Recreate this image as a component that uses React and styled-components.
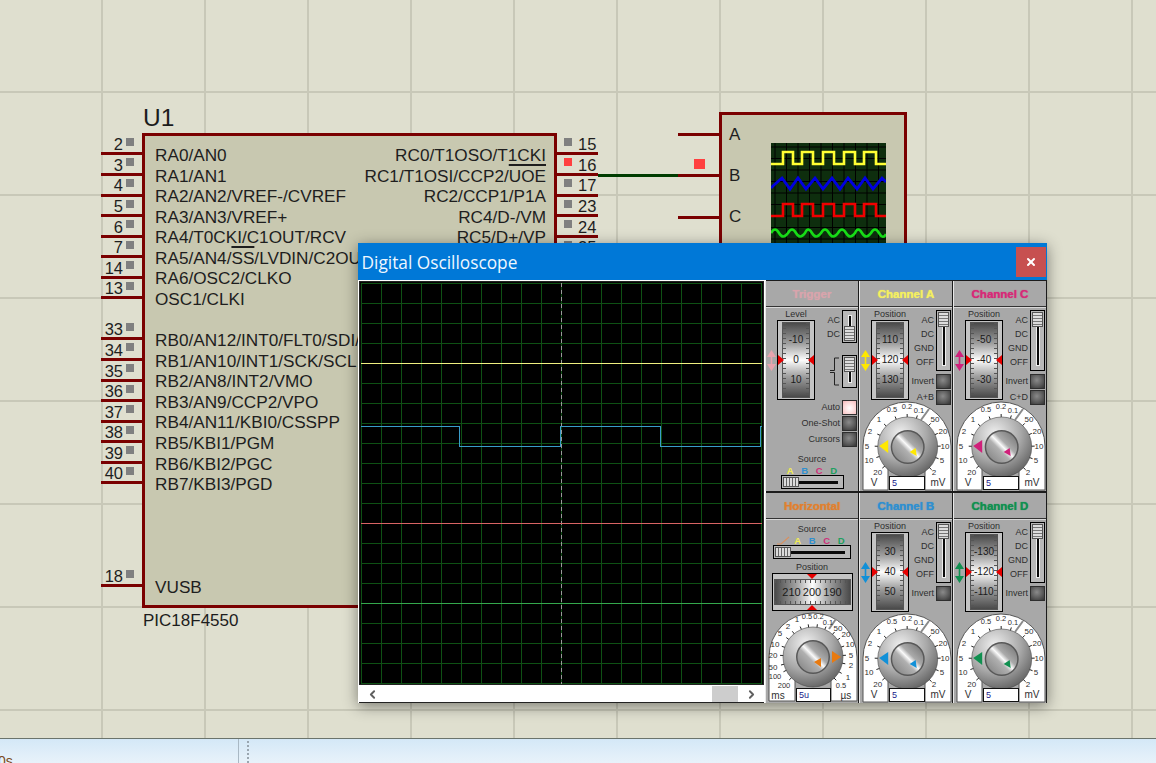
import React from "react";
import styled, { createGlobalStyle, css } from "styled-components";
import { ChevronLeft, ChevronRight, X } from "lucide-react";

const GlobalStyle = createGlobalStyle`
  html, body {
    margin: 0;
    padding: 0;
    overflow: hidden;
    font-family: "Liberation Sans", Arial, sans-serif;
  }
`;

const MAROON = "#7a0000";
const ROW = "20.57px";

const Page = styled.div`
  width: 1156px;
  height: 763px;
  display: flex;
  flex-direction: column;
  overflow: hidden;
`;

const Canvas = styled.div`
  position: relative;
  flex: 1;
  overflow: hidden;
  background-color: #dfdfcf;
  background-image: linear-gradient(to right, #c8c8b8 2px, transparent 2px),
    linear-gradient(to bottom, #c8c8b8 2px, transparent 2px);
  background-size: 103px 103px;
  background-position: 101px 91px;
`;

const StatusBar = styled.div`
  height: 24px;
  border-top: 1px solid #6b746c;
  background: linear-gradient(#d4e8f7, #e8f2fa);
  display: flex;
  overflow: hidden;
`;

const StatusTime = styled.div`
  width: 240px;
  margin-left: -2px;
  padding-top: 14px;
  font-size: 14px;
  color: #7a4a20;
  border-right: 1px solid #a9b8c4;
`;

const StatusGrip = styled.div`
  width: 1px;
  margin: 2px 0 0 8px;
  border-left: 2px dotted #9aa6b0;
`;

/* schematic parts */
const ChipRef = styled.div`
  position: absolute;
  left: 143px;
  top: 104px;
  font-size: 24.5px;
  line-height: 28px;
  color: #1c1c1c;
`;

const ChipName = styled.div`
  position: absolute;
  left: 143px;
  top: 611px;
  font-size: 17px;
  line-height: 20px;
  color: #1c1c1c;
`;

const Chip = styled.div`
  position: absolute;
  left: 142px;
  top: 133px;
  width: 415px;
  height: 475px;
  box-sizing: border-box;
  border: 3px solid ${MAROON};
  background: #c8c8b0;
  display: flex;
  justify-content: space-between;
  padding: 9.1px 8px 0 10px;
`;

const LabelColumn = styled.div`
  width: 190px;
  flex: none;
  display: flex;
  flex-direction: column;
  align-items: ${(p) => (p.$right ? "flex-end" : "flex-start")};
`;

const PinLabel = styled.div`
  height: ${ROW};
  line-height: ${ROW};
  font-size: 17.2px;
  color: #1e1e1e;
  white-space: nowrap;
`;

const Over = styled.span`
  text-decoration: overline;
  text-decoration-thickness: 2px;
`;

const PinColumn = styled.div`
  position: absolute;
  top: -1.2px;
  ${(p) => (p.$right ? "left: calc(100% + 3px);" : "right: calc(100% + 3px);")}
  width: 41px;
`;

const Pin = styled.div`
  height: ${ROW};
  box-sizing: border-box;
  display: flex;
  flex-direction: ${(p) => (p.$right ? "row-reverse" : "row")};
  justify-content: flex-end;
  gap: ${(p) => (p.$right ? 6 : 3)}px;
  padding: ${(p) => (p.$right ? "0 0 0 7px" : "0 8px 0 0")};
  border-bottom: ${(p) => (p.$blank ? "none" : `3px solid ${MAROON}`)};
`;

const PinNumber = styled.span`
  font-size: 16.5px;
  line-height: 17px;
  color: #1e1e1e;
  margin-top: 1.5px;
`;

const PinMark = styled.i`
  width: 8px;
  height: 8px;
  margin-top: 3px;
  background: ${(p) => (p.$live ? "#ff4040" : "#808080")};
`;

const Scope = styled.div`
  position: absolute;
  left: 719px;
  top: 112px;
  width: 188px;
  height: 190px;
  box-sizing: border-box;
  border: 3px solid ${MAROON};
  background: #c8c8b0;
  display: flex;
  padding: 28px 0 0 49px;
`;

const ScopeInputs = styled.div`
  position: absolute;
  right: 100%;
  top: 5.5px;
  width: 44px;
`;

const ScopeWire = styled.div`
  height: 41.3px;
  box-sizing: border-box;
  display: flex;
  align-items: flex-start;
  position: relative;

  &::before {
    content: "";
    position: absolute;
    left: 0;
    right: 0;
    top: 12.5px;
    height: 3px;
    background: ${MAROON};
  }

  &::after {
    content: "${(p) => p.$name}";
    position: absolute;
    left: calc(100% + 7px);
    top: 4px;
    font-size: 17px;
    line-height: 20px;
    color: #1e1e1e;
  }
`;

const NetWire = styled.div`
  position: absolute;
  left: 598px;
  top: 174px;
  width: 80px;
  height: 3px;
  background: #003c00;
`;

const NetProbe = styled.div`
  position: absolute;
  left: 694px;
  top: 159px;
  width: 11px;
  height: 10px;
  background: #ff4040;
`;

const ScopeScreen = styled.svg`
  display: block;
  background-color: #0e2e0e;
`;

/* oscilloscope window */
const ScopeWindow = styled.div`
  position: absolute;
  left: 358px;
  top: 243px;
  width: 689px;
  height: 460px;
  display: flex;
  flex-direction: column;
  background: #fff;
  box-shadow: 0 3px 14px rgba(0, 0, 0, 0.45);
`;

const TitleBar = styled.div`
  height: 37px;
  flex: none;
  background: #0078d7;
  display: flex;
  align-items: center;
  justify-content: space-between;
  padding: 0 1px 0 3.5px;
`;

const WindowTitle = styled.div`
  font-family: "Open Sans", "Noto Sans", sans-serif;
  font-size: 17.3px;
  line-height: 24px;
  margin-top: 3px;
  color: #eef7ff;
`;

const CloseButton = styled.div`
  width: 30px;
  height: 30px;
  background: #c75050;
  color: #fff;
  display: flex;
  align-items: center;
  justify-content: center;
`;

const WindowBody = styled.div`
  flex: 1;
  display: flex;
  min-height: 0;
`;

const PlotColumn = styled.div`
  width: 407px;
  flex: none;
  box-sizing: border-box;
  padding: 1px 1px 0 1px;
  display: flex;
  flex-direction: column;
`;

const PlotFrame = styled.div`
  width: 405px;
  height: 404px;
  box-sizing: border-box;
  border: 1px solid #222;
  padding: 1px;
  background: #050505;
`;

const Plot = styled.svg`
  display: block;
  background: #000;
`;

const ScrollBar = styled.div`
  height: 17px;
  margin-top: 1px;
  width: 405px;
  box-sizing: border-box;
  display: flex;
  align-items: center;
  color: #5f5f5f;
  border-bottom: 1px solid #222;
`;

const ScrollArrow = styled.div`
  width: 26px;
  flex: none;
  display: flex;
  justify-content: center;
`;

const ScrollTrack = styled.div`
  flex: 1;
  height: 100%;
  display: flex;
  justify-content: flex-end;
`;

const ScrollThumb = styled.div`
  width: 26px;
  background: #cdcdcd;
`;

const Controls = styled.div`
  flex: 1;
  display: grid;
  grid-template-columns: repeat(3, 92px);
  grid-template-rows: 210px 210px;
  gap: 2px;
  padding: 1px 1px 0 1px;
  background: linear-gradient(to right, #fff 1px, #1c1c1c 1px);
`;

const Panel = styled.div`
  background: #a8a8a8;
  border-left: 1px solid #e8e8e8;
  margin-left: -1px;
  display: flex;
  flex-direction: column;
  overflow: hidden;
`;

const PanelTitle = styled.div`
  height: 25px;
  flex: none;
  border-bottom: 1px solid #333;
  box-shadow: 0 1px 0 #d8d8d8;
  display: flex;
  align-items: center;
  justify-content: center;
  font-size: 11.5px;
  font-weight: 700;
  color: ${(p) => p.$color};
  text-shadow: 0 0 1px ${(p) => p.$color};
`;

const PanelBody = styled.div`
  flex: 1;
  display: flex;
  flex-direction: column;
`;

const TopSection = styled.div`
  height: 93px;
  flex: none;
  display: flex;
`;

const FaderColumn = styled.div`
  width: 49px;
  flex: none;
  display: flex;
  flex-direction: column;
`;

const SmallLabel = styled.div`
  font-size: 9px;
  line-height: ${(p) => p.$line || 11}px;
  color: #2e2e2e;
  text-align: ${(p) => p.$align || "center"};
  white-space: nowrap;
`;

const FaderCaption = styled(SmallLabel)`
  margin: 2px 0 0 11px;
`;

const FaderRow = styled.div`
  display: flex;
  align-items: center;
`;

const ArrowSlot = styled.svg`
  width: 11px;
  height: 21px;
  flex: none;
`;

const Fader = styled.div`
  position: relative;
  box-sizing: border-box;
  border: 1px solid #000;
  background: #c4c4c4;
  ${(p) =>
    p.$horizontal
      ? css`
          width: 81px;
          height: 38px;
          margin: 0 auto;
          padding: 6px 2px;
        `
      : css`
          width: 38px;
          height: 80px;
          padding: 2px 5px;
        `}

  &::before,
  &::after {
    content: "";
    position: absolute;
    width: 0;
    height: 0;
    z-index: 1;
    ${(p) =>
      p.$horizontal
        ? css`
            left: calc(50% - 5px);
            border-left: 5px solid transparent;
            border-right: 5px solid transparent;
          `
        : css`
            top: calc(50% - 5px);
            border-top: 5px solid transparent;
            border-bottom: 5px solid transparent;
          `}
  }

  &::before {
    ${(p) =>
      p.$horizontal
        ? "top: 0; border-top: 5px solid #e60000;"
        : "left: 0; border-left: 6px solid #e60000;"}
  }

  &::after {
    ${(p) =>
      p.$horizontal
        ? "bottom: 0; border-bottom: 5px solid #e60000;"
        : "right: 0; border-right: 6px solid #e60000;"}
  }
`;

const Drum = styled.div`
  position: relative;
  width: 100%;
  height: 100%;
  display: flex;
  align-items: center;
  justify-content: center;
  flex-direction: ${(p) => (p.$horizontal ? "row" : "column")};
  background: linear-gradient(
    ${(p) => (p.$horizontal ? "to right" : "to bottom")},
    #4a4a4a,
    #a0a0a0 28%,
    #fdfdfd 50%,
    #a0a0a0 72%,
    #4a4a4a
  );
  box-shadow: 0 0 0 1px #555;

  &::before,
  &::after {
    content: "";
    position: absolute;
    ${(p) =>
      p.$horizontal
        ? css`
            left: 0;
            right: 0;
            height: 3px;
            background: repeating-linear-gradient(to right, #555 0 1px, transparent 1px 5px);
          `
        : css`
            top: 0;
            bottom: 0;
            width: 3px;
            background: repeating-linear-gradient(to bottom, #555 0 1px, transparent 1px 5px);
          `}
  }

  &::before {
    ${(p) => (p.$horizontal ? "top: 0;" : "left: 0;")}
  }

  &::after {
    ${(p) => (p.$horizontal ? "bottom: 0;" : "right: 0;")}
  }
`;

const DrumMark = styled.span`
  font-size: 10px;
  color: #1a1a1a;
  ${(p) =>
    p.$horizontal
      ? "width: 20.5px; text-align: center; font-size: 11px;"
      : "line-height: 20px;"}
`;

const SwitchColumn = styled.div`
  flex: 1;
  display: flex;
  flex-direction: column;
  align-items: flex-end;
  padding: 3px 1px 0 0;
`;

const SwitchRow = styled.div`
  display: flex;
  justify-content: flex-end;
  align-items: ${(p) => (p.$center ? "center" : "flex-start")};
  gap: 2px;
  margin-top: ${(p) => p.$gap || 0}px;
`;

const SwitchLabels = styled.div`
  padding-top: 3px;
`;

const SlideSwitch = styled.div`
  position: relative;
  box-sizing: border-box;
  border: 1px solid #000;
  background: #b8b8b8;
  display: flex;
  ${(p) =>
    p.$horizontal
      ? css`
          height: 14px;
          width: ${p.$size}px;
          align-items: stretch;
          padding: 1px;
        `
      : css`
          width: 15px;
          height: ${p.$size}px;
          flex-direction: column;
          padding: 1px;
          justify-content: ${p.$end ? "flex-end" : "flex-start"};
        `}

  &::before {
    content: "";
    position: absolute;
    background: #0a0a0a;
    ${(p) =>
      p.$horizontal
        ? "left: 6px; right: 5px; top: 4.5px; height: 3px;"
        : "top: 5px; bottom: 5px; left: 5.5px; width: 2px; box-shadow: 0 0 0 1px #eee;"}
  }
`;

const SwitchThumb = styled.div`
  position: relative;
  flex: none;
  box-sizing: border-box;
  border: 1px solid #555;
  ${(p) =>
    p.$horizontal
      ? css`
          width: 16px;
          background: repeating-linear-gradient(to right, #dcdcdc 0 2px, #666 2px 3px);
        `
      : css`
          height: 15px;
          background: repeating-linear-gradient(to bottom, #dcdcdc 0 2px, #777 2px 3px);
        `}
`;

const PushButton = styled.div`
  width: 15px;
  height: 15px;
  flex: none;
  box-sizing: border-box;
  border: 1px solid #2e2e2e;
  background: ${(p) =>
    p.$on
      ? "radial-gradient(circle at 50% 55%, #fff 0, #fbd0d0 70%, #efb4b8 100%)"
      : "radial-gradient(circle at 45% 40%, #8a8a8a 0, #5c5c5c 55%, #333 100%)"};
`;

const ButtonRow = styled.div`
  height: 15px;
  margin-top: ${(p) => p.$gap || 0}px;
  padding-right: 1px;
  display: flex;
  align-items: center;
  justify-content: flex-end;
  gap: 2px;
`;

const SourceLabel = styled(SmallLabel)`
  margin-top: ${(p) => p.$gap}px;
`;

const SourceKeys = styled.div`
  display: flex;
  justify-content: center;
  align-items: center;
  height: 10px;
`;

const SourceKey = styled.span`
  width: 14.5px;
  text-align: center;
  font-size: 9.5px;
  font-weight: 700;
  color: ${(p) => p.$color};
`;

const CenteredSlider = styled(SlideSwitch)`
  margin: 0 auto;
`;

const DialSvg = styled.svg`
  display: block;
  flex: none;
`;

const DialText = styled.text`
  font-family: "Liberation Sans", Arial, sans-serif;
  font-size: ${(p) => p.$size || 8}px;
  fill: #303030;
  text-anchor: middle;
  dominant-baseline: central;
`;

const DialValue = styled.text`
  font-family: "Liberation Sans", Arial, sans-serif;
  font-size: 9px;
  fill: #20208a;
  dominant-baseline: central;
`;

const VOLT_SCALE = [
  ["20", 17.7, 72], ["10", 9, 60], ["5", 7, 46], ["2", 10, 31], ["1", 19, 19],
  ["0.5", 32, 9], ["0.2", 47, 6], ["0.1", 59, 10], ["50", 75, 19], ["20", 83, 31],
  ["10", 85, 46], ["5", 82, 60], ["2", 74, 72],
];

const TIME_SCALE = [
  ["200", 18, 74], ["100", 9, 65], ["50", 7, 56], ["20", 7, 44], ["10", 9, 33],
  ["5", 14, 22], ["2", 22, 15], ["1", 31, 8], ["0.5", 41, 5], ["0.2", 52.5, 5],
  ["0.1", 62, 11], ["50", 72, 17], ["20", 80, 23], ["10", 84, 33], ["5", 85, 44],
  ["2", 85, 54], ["1", 82, 66], ["0.5", 75, 74],
];

const Dial = ({ name, color, scale, units, value, wide }) => {
  const cx = wide ? 47 : 47.7;
  const cy = wide ? 46 : 47;
  const left = wide ? 30 : 29;
  const right = 64;
  const notch = wide ? [63, 18, 70, 8] : [61, 20, 69, 9];
  const boxTop = wide ? 77 : 76;
  const big = wide
    ? `${cx + 28},${cy} ${cx + 19},${cy - 6} ${cx + 19},${cy + 6}`
    : `${cx - 28.5},${cy - 1} ${cx - 19.5},${cy - 7} ${cx - 19.5},${cy + 6}`;
  const small = wide
    ? `${cx + 1},${cy + 5} ${cx + 8},${cy + 1} ${cx + 8},${cy + 10}`
    : `${cx + 2},${cy + 5} ${cx + 8},${cy + 1} ${cx + 9},${cy + 9}`;

  return (
    <DialSvg width="92" height="91" viewBox="0 0 92 91">
      <defs>
        <radialGradient id={`${name}-body`} cx="38%" cy="28%" r="80%">
          <stop offset="0" stopColor="#f0f0f0" />
          <stop offset="0.55" stopColor="#a8a8a8" />
          <stop offset="1" stopColor="#5a5a5a" />
        </radialGradient>
        <linearGradient id={`${name}-cap`} x1="0" y1="1" x2="1" y2="0">
          <stop offset="0" stopColor="#7c7c7c" />
          <stop offset="0.42" stopColor="#b0b0b0" />
          <stop offset="0.52" stopColor="#fafafa" />
          <stop offset="0.62" stopColor="#aaaaaa" />
          <stop offset="1" stopColor="#6c6c6c" />
        </linearGradient>
      </defs>
      <path
        d={`M3 90 V46 A44 44 0 0 1 91 46 V90 H${right + 1} V64 H${left - 1} V90 Z`}
        fill="#fff"
        stroke="#555"
        strokeWidth="1"
      />
      <line x1={notch[0]} y1={notch[1]} x2={notch[2]} y2={notch[3]} stroke="#8a8a8a" strokeWidth="2" />
      {scale.map(([label, x, y], i) => {
        const len = Math.hypot(x - cx, y - cy);
        const ux = (x - cx) / len;
        const uy = (y - cy) / len;
        return (
          <g key={i}>
            <line
              x1={cx + ux * 29}
              y1={cy + uy * 29}
              x2={cx + ux * 33}
              y2={cy + uy * 33}
              stroke="#222"
              strokeWidth="1"
            />
            <DialText x={x} y={y} $size={label.length > 2 ? 7.5 : 8}>
              {label}
            </DialText>
          </g>
        );
      })}
      <circle cx={cx} cy={cy} r="30" fill={`url(#${name}-body)`} stroke="#4a4a4a" strokeWidth="0.6" />
      <circle cx={cx} cy={cy} r="17" fill="#585858" />
      <circle cx={cx} cy={cy} r="15.5" fill={`url(#${name}-cap)`} />
      <polygon points={big} fill={color} />
      <polygon points={small} fill={color} />
      <rect x={left + 0.5} y={boxTop + 0.5} width={right - left} height="13" fill="#fff" stroke="#111" />
      <DialValue x={left + 3} y={boxTop + 7}>
        {value}
      </DialValue>
      <DialText x={wide ? 12 : 14} y={wide ? 84 : 82} $size={10}>
        {units[0]}
      </DialText>
      <DialText x={wide ? 80 : 78} y={wide ? 84 : 82} $size={10}>
        {units[1]}
      </DialText>
    </DialSvg>
  );
};

const DoubleArrow = ({ color }) => (
  <ArrowSlot viewBox="0 0 11 21">
    <path d="M5.5 0 L10 7 H1 Z M5.5 21 L10 14 H1 Z" fill={color} />
    <rect x="4.7" y="5" width="1.6" height="11" fill={color} />
  </ArrowSlot>
);

const VerticalFader = ({ caption, marks, color }) => (
  <FaderColumn>
    <FaderCaption>{caption}</FaderCaption>
    <FaderRow>
      <DoubleArrow color={color} />
      <Fader>
        <Drum>
          {marks.map((m) => (
            <DrumMark key={m}>{m}</DrumMark>
          ))}
        </Drum>
      </Fader>
    </FaderRow>
  </FaderColumn>
);

const ChannelPanel = ({ id, title, color, arrow, marks, combo }) => (
  <Panel>
    <PanelTitle $color={color}>{title}</PanelTitle>
    <PanelBody>
      <TopSection>
        <VerticalFader caption="Position" marks={marks} color={arrow} />
        <SwitchColumn>
          <SwitchRow>
            <SwitchLabels>
              {["AC", "DC", "GND", "OFF"].map((l) => (
                <SmallLabel key={l} $line={14} $align="right">
                  {l}
                </SmallLabel>
              ))}
            </SwitchLabels>
            <SlideSwitch $size={61}>
              <SwitchThumb />
            </SlideSwitch>
          </SwitchRow>
          <SwitchRow $center $gap={3}>
            <SmallLabel>Invert</SmallLabel>
            <PushButton />
          </SwitchRow>
          {combo && (
            <SwitchRow $center $gap={1}>
              <SmallLabel>{combo}</SmallLabel>
              <PushButton />
            </SwitchRow>
          )}
        </SwitchColumn>
      </TopSection>
      <Dial name={id} color={arrow} scale={VOLT_SCALE} units={["V", "mV"]} value="5" />
    </PanelBody>
  </Panel>
);

const SOURCES = [
  ["A", "#f4ee50"],
  ["B", "#3090d0"],
  ["C", "#d0307a"],
  ["D", "#20a060"],
];

const TriggerPanel = () => (
  <Panel>
    <PanelTitle $color="#d8a4ac">Trigger</PanelTitle>
    <PanelBody>
      <TopSection>
        <VerticalFader caption="Level" marks={["-10", "0", "10"]} color="#e8a4ae" />
        <SwitchColumn>
          <SwitchRow>
            <SwitchLabels>
              <SmallLabel $line={14} $align="right">AC</SmallLabel>
              <SmallLabel $line={14} $align="right">DC</SmallLabel>
            </SwitchLabels>
            <SlideSwitch $size={33} $end>
              <SwitchThumb />
            </SlideSwitch>
          </SwitchRow>
          <SwitchRow $center $gap={12}>
            <svg width="10" height="29" viewBox="0 0 10 29">
              <path d="M0 13.5 H4.5 V1 H9 M0 15.5 H4.5 V28 H9" fill="none" stroke="#222" strokeWidth="1" />
            </svg>
            <SlideSwitch $size={33}>
              <SwitchThumb />
            </SlideSwitch>
          </SwitchRow>
        </SwitchColumn>
      </TopSection>
      <ButtonRow>
        <SmallLabel>Auto</SmallLabel>
        <PushButton $on />
      </ButtonRow>
      <ButtonRow $gap={1}>
        <SmallLabel>One-Shot</SmallLabel>
        <PushButton />
      </ButtonRow>
      <ButtonRow $gap={1}>
        <SmallLabel>Cursors</SmallLabel>
        <PushButton />
      </ButtonRow>
      <SourceLabel $gap={7}>Source</SourceLabel>
      <SourceKeys>
        {SOURCES.map(([k, c]) => (
          <SourceKey key={k} $color={c}>{k}</SourceKey>
        ))}
      </SourceKeys>
      <CenteredSlider $horizontal $size={63}>
        <SwitchThumb $horizontal />
      </CenteredSlider>
    </PanelBody>
  </Panel>
);

const HorizontalPanel = () => (
  <Panel>
    <PanelTitle $color="#e08030">Horizontal</PanelTitle>
    <PanelBody>
      <SourceLabel $gap={5}>Source</SourceLabel>
      <SourceKeys>
        <svg width="15" height="9" viewBox="0 0 15 9">
          <path d="M1 8 H5 L13 1" fill="none" stroke="#d89060" strokeWidth="1.2" />
        </svg>
        {SOURCES.map(([k, c]) => (
          <SourceKey key={k} $color={c}>{k}</SourceKey>
        ))}
      </SourceKeys>
      <CenteredSlider $horizontal $size={78}>
        <SwitchThumb $horizontal />
      </CenteredSlider>
      <SourceLabel $gap={3}>Position</SourceLabel>
      <Fader $horizontal>
        <Drum $horizontal>
          {["210", "200", "190"].map((m) => (
            <DrumMark key={m} $horizontal>{m}</DrumMark>
          ))}
        </Drum>
      </Fader>
      <Dial name="horizontal" wide color="#e87a10" scale={TIME_SCALE} units={["ms", "µs"]} value="5u" />
    </PanelBody>
  </Panel>
);

const LEFT_PINS = [
  ["2", "RA0/AN0"], ["3", "RA1/AN1"], ["4", "RA2/AN2/VREF-/CVREF"], ["5", "RA3/AN3/VREF+"],
  ["6", "RA4/T0CKI/C1OUT/RCV"],
  ["7", <>RA5/AN4/<Over>SS</Over>/LVDIN/C2OUT</>],
  ["14", "RA6/OSC2/CLKO"], ["13", "OSC1/CLKI"],
  null,
  ["33", "RB0/AN12/INT0/FLT0/SDI/SDA"], ["34", "RB1/AN10/INT1/SCK/SCL"], ["35", "RB2/AN8/INT2/VMO"],
  ["36", "RB3/AN9/CCP2/VPO"], ["37", "RB4/AN11/KBI0/CSSPP"], ["38", "RB5/KBI1/PGM"],
  ["39", "RB6/KBI2/PGC"], ["40", "RB7/KBI3/PGD"],
  null, null, null, null,
  ["18", "VUSB"],
];

const RIGHT_PINS = [
  ["15", "RC0/T1OSO/T1CKI"],
  ["16", <>RC1/T1OSI/CCP2/<Over>UOE</Over></>],
  ["17", "RC2/CCP1/P1A"],
  ["23", "RC4/D-/VM"],
  ["24", "RC5/D+/VP"],
  ["25", ""],
];

const squarePath = (base, high, low, edges) => {
  let d = `M0 ${base}`;
  let level = base;
  edges.forEach((x) => {
    d += ` L${x} ${level}`;
    level = level === high ? low : high;
    d += ` L${x} ${level}`;
  });
  return `${d} L115 ${level}`;
};

const EDGES = [12, 22, 31, 42, 52, 63, 73, 84, 93, 105];

const MiniScreen = () => {
  const cells = Array.from({ length: 11 }, (_, i) => i * 11.5 + 4);
  return (
    <ScopeScreen width="115" height="110" viewBox="0 0 115 110">
      {cells.map((x) => (
        <line key={`v${x}`} x1={x} y1="0" x2={x} y2="110" stroke="#000" />
      ))}
      {cells.map((y) => (
        <line key={`h${y}`} x1="0" y1={y} x2="115" y2={y} stroke="#000" />
      ))}
      <path d={squarePath(21, 9, 21, EDGES)} fill="none" stroke="#ffff33" strokeWidth="2.6" />
      <path
        d="M0 45 L3 42 L11 35 L19 46 L27 35 L35 46 L44 35 L52 46 L61 35 L69 46 L77 35 L86 46 L94 35 L102 46 L111 35 L115 39"
        fill="none"
        stroke="#0000e0"
        strokeWidth="2.8"
      />
      <path d={squarePath(73, 61, 73, EDGES)} fill="none" stroke="#f00000" strokeWidth="2.6" />
      <path
        d="M0 90 Q4 83 8 90 T17 90 Q21 83 25 90 T34 90 Q37 83 41 90 T50 90 Q54 83 58 90 T67 90 Q71 83 75 90 T84 90 Q87 83 91 90 T100 90 Q104 83 108 90 T115 91"
        fill="none"
        stroke="#18e018"
        strokeWidth="2.6"
      />
    </ScopeScreen>
  );
};

const steps = Array.from({ length: 21 }, (_, i) => i * 20 + 0.5);
const gridPath = steps.map((p) => `M${p} 0 V401 M0 ${p} H401`).join(" ");

const TraceView = () => (
  <Plot width="401" height="401" viewBox="0 0 401 401" shapeRendering="crispEdges">
    <path d={gridPath} fill="none" stroke="#0e5014" />
    <path d="M200.5 0 V401" stroke="#9a9a9a" strokeDasharray="4 3" />
    <path d="M0 80.5 H401" stroke="#f0f080" />
    <path d="M0 240.5 H401" stroke="#d86464" />
    <path d="M0 320.5 H401" stroke="#34a84c" />
    <path
      d="M0 143.5 H98.5 V163.5 H199.5 V143.5 H299.5 V163.5 H399.5 V143.5 H401"
      fill="none"
      stroke="#3a9cc8"
    />
  </Plot>
);

const App = () => {
  return (
    <Page>
      <GlobalStyle />
      <Canvas>
        <ChipRef>U1</ChipRef>
        <Chip>
          <PinColumn>
            {LEFT_PINS.map((pin, i) =>
              pin ? (
                <Pin key={i}>
                  <PinNumber>{pin[0]}</PinNumber>
                  <PinMark />
                </Pin>
              ) : (
                <Pin key={i} $blank />
              )
            )}
          </PinColumn>
          <LabelColumn>
            {LEFT_PINS.map((pin, i) => (
              <PinLabel key={i}>{pin ? pin[1] : ""}</PinLabel>
            ))}
          </LabelColumn>
          <LabelColumn $right>
            {RIGHT_PINS.map((pin) => (
              <PinLabel key={pin[0]}>{pin[1]}</PinLabel>
            ))}
          </LabelColumn>
          <PinColumn $right>
            {RIGHT_PINS.map((pin) => (
              <Pin key={pin[0]} $right>
                <PinNumber>{pin[0]}</PinNumber>
                <PinMark $live={pin[0] === "16"} />
              </Pin>
            ))}
          </PinColumn>
        </Chip>
        <ChipName>PIC18F4550</ChipName>
        <NetWire />
        <NetProbe />
        <Scope>
          <ScopeInputs>
            <ScopeWire $name="A" />
            <ScopeWire $name="B" />
            <ScopeWire $name="C" />
          </ScopeInputs>
          <MiniScreen />
        </Scope>
        <ScopeWindow>
          <TitleBar>
            <WindowTitle>Digital Oscilloscope</WindowTitle>
            <CloseButton>
              <X size={12} strokeWidth={4} />
            </CloseButton>
          </TitleBar>
          <WindowBody>
            <PlotColumn>
              <PlotFrame>
                <TraceView />
              </PlotFrame>
              <ScrollBar>
                <ScrollArrow>
                  <ChevronLeft size={13} strokeWidth={3.5} />
                </ScrollArrow>
                <ScrollTrack>
                  <ScrollThumb />
                </ScrollTrack>
                <ScrollArrow>
                  <ChevronRight size={13} strokeWidth={3.5} />
                </ScrollArrow>
              </ScrollBar>
            </PlotColumn>
            <Controls>
              <TriggerPanel />
              <ChannelPanel
                id="cha"
                title="Channel A"
                color="#f4f060"
                arrow="#ffe800"
                marks={["110", "120", "130"]}
                combo="A+B"
              />
              <ChannelPanel
                id="chc"
                title="Channel C"
                color="#d62a78"
                arrow="#d0207a"
                marks={["-50", "-40", "-30"]}
                combo="C+D"
              />
              <HorizontalPanel />
              <ChannelPanel
                id="chb"
                title="Channel B"
                color="#2f8fd0"
                arrow="#1090d8"
                marks={["30", "40", "50"]}
              />
              <ChannelPanel
                id="chd"
                title="Channel D"
                color="#109050"
                arrow="#109050"
                marks={["-130", "-120", "-110"]}
              />
            </Controls>
          </WindowBody>
        </ScopeWindow>
      </Canvas>
      <StatusBar>
        <StatusTime>0s</StatusTime>
        <StatusGrip />
      </StatusBar>
    </Page>
  );
};

export default App;
